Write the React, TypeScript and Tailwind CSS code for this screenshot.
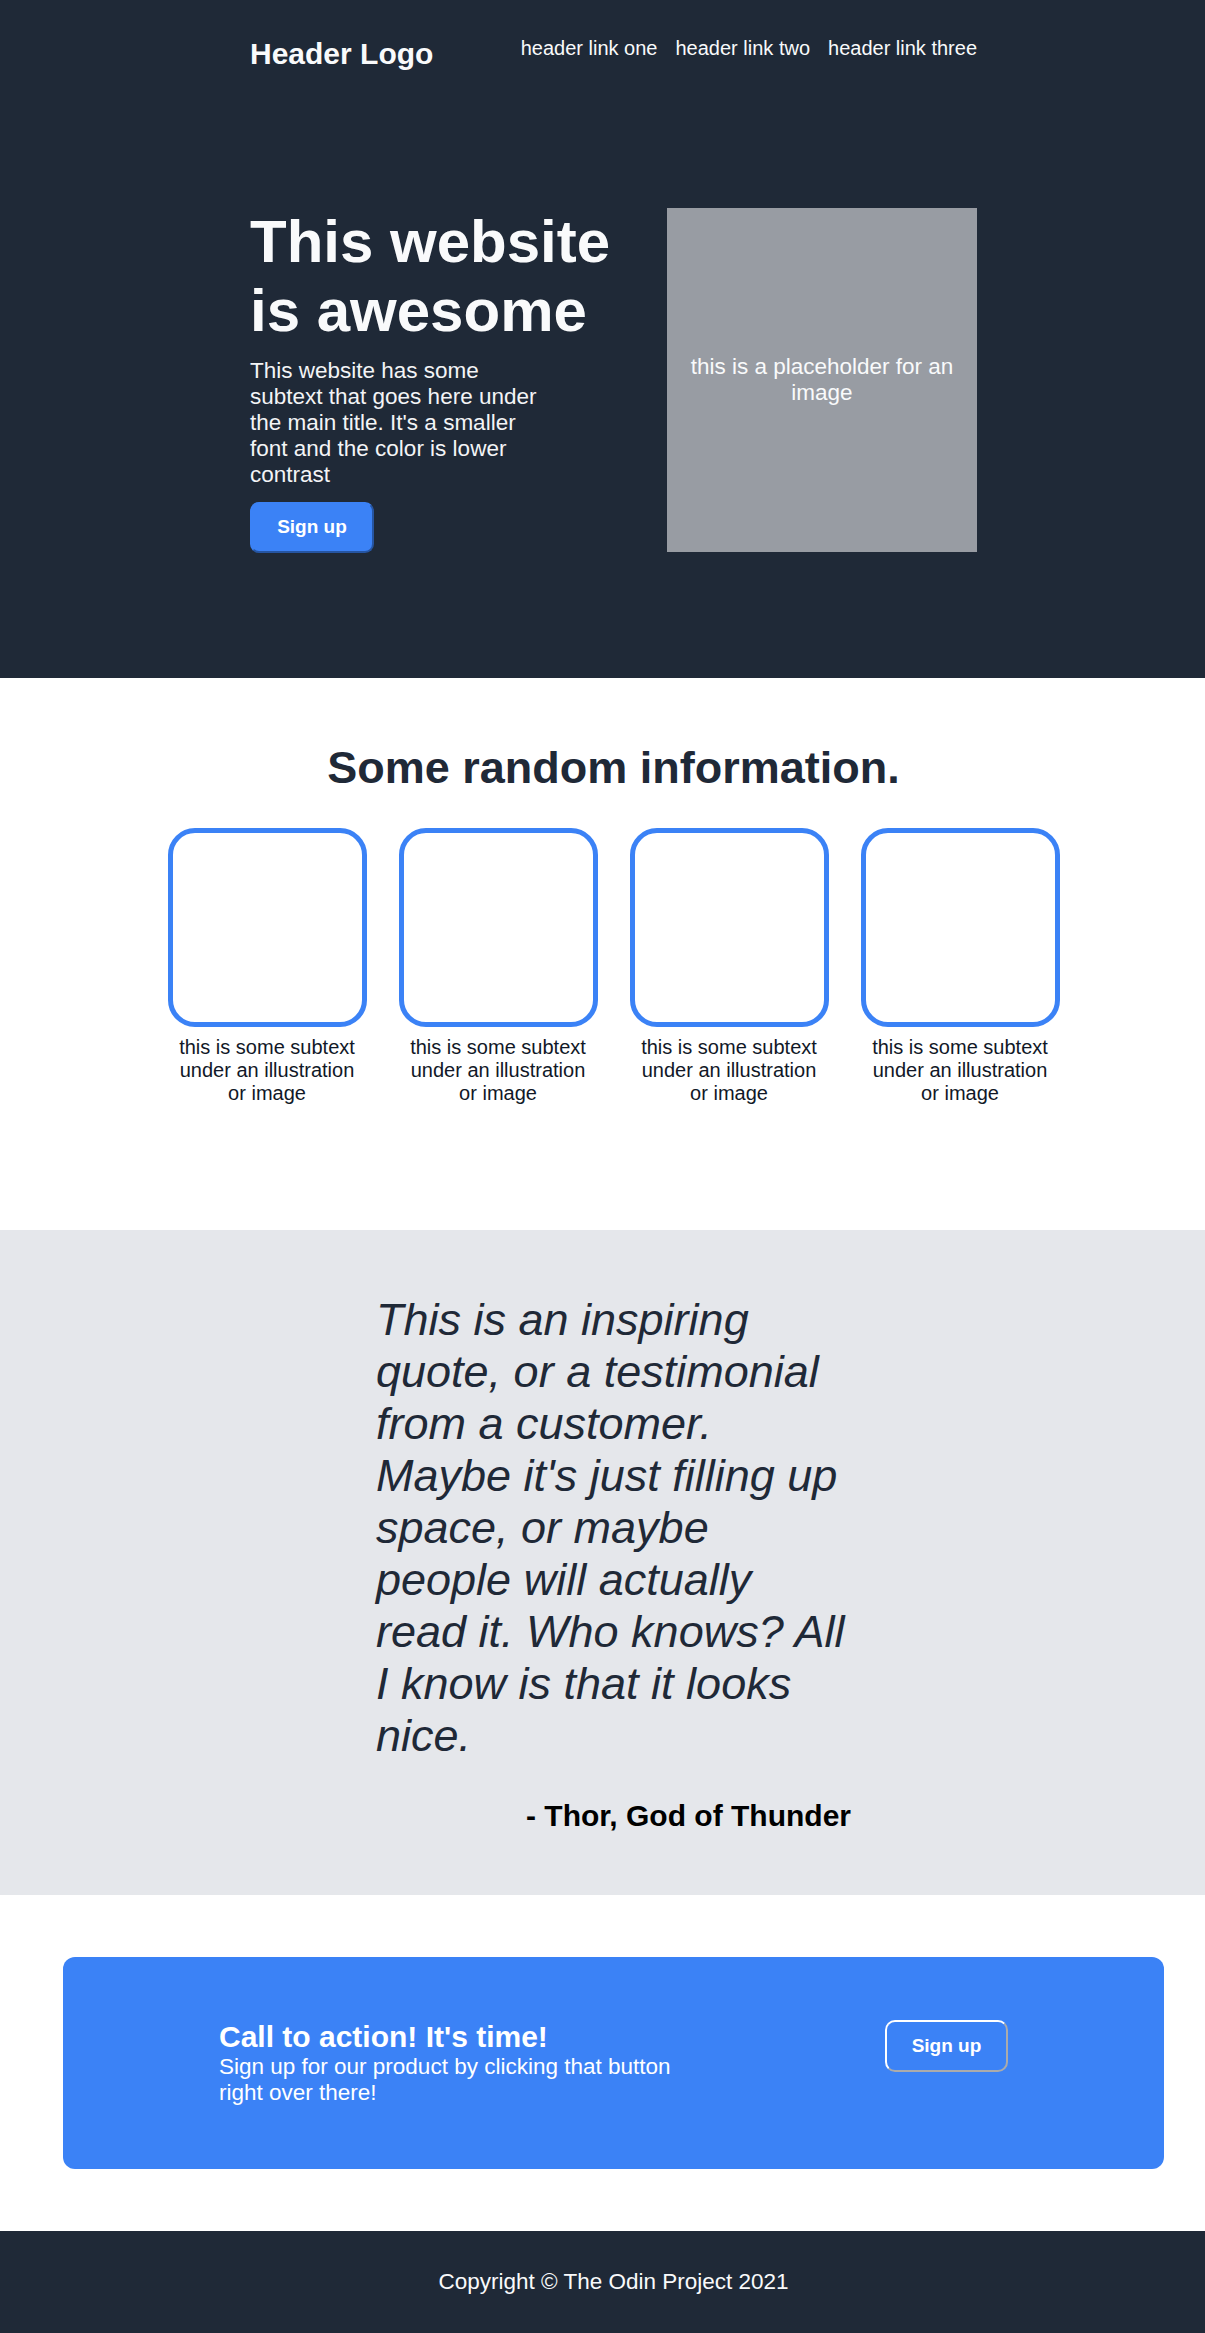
import React from 'react';

const features = [
  'this is some subtext under an illustration or image',
  'this is some subtext under an illustration or image',
  'this is some subtext under an illustration or image',
  'this is some subtext under an illustration or image',
];

function Header() {
  return (
    <div className="w-[727px] mx-auto pt-[37px] flex justify-between items-start">
      <div className="text-[30px] font-bold leading-[normal] text-[#f9fafb]">Header Logo</div>
      <nav className="flex gap-[18px] text-[20px] leading-[normal] text-[#f9fafb]">
        <a href="#">header link one</a>
        <a href="#">header link two</a>
        <a href="#">header link three</a>
      </nav>
    </div>
  );
}

function Hero() {
  return (
    <div className="w-[727px] mx-auto mt-[136px] flex justify-between items-center">
      <div className="w-[400px] flex flex-col items-start">
        <h1 className="text-[60px] font-bold leading-[normal] text-[#f9fafb]">This website is awesome</h1>
        <p className="mt-[13px] w-[295px] text-[22.5px] leading-[normal] text-[#f3f4f6]">
          This website has some subtext that goes here under the main title. It's a smaller font and the color is lower
          contrast
        </p>
        <button className="mt-[14px] w-[124px] h-[51px] rounded-[9px] bg-[#3b82f6] border-2 [border-style:outset] border-[#3b82f6] text-[19px] font-bold text-white">
          Sign up
        </button>
      </div>
      <div className="w-[310px] h-[344px] bg-[#989ca3] flex items-center justify-center text-center px-4 text-[22.5px] leading-[normal] text-[#f9fafb]">
        this is a placeholder for an image
      </div>
    </div>
  );
}

export default function App() {
  return (
    <div className="font-['Liberation_Sans',Arial,sans-serif]">
      <section className="bg-[#1f2937] pl-[22px] h-[678px] overflow-hidden">
        <Header />
        <Hero />
      </section>

      <section className="bg-white pl-[22px] pt-[64px] h-[552px] overflow-hidden">
        <h2 className="text-center text-[45px] font-bold leading-[normal] text-[#1f2937]">Some random information.</h2>
        <div className="mt-[34px] flex justify-center gap-[32px]">
          {features.map((text, i) => (
            <div key={i} className="w-[199px] flex flex-col items-center">
              <div className="w-[199px] h-[199px] border-[5px] border-[#3b82f6] rounded-[27px]" />
              <p className="mt-[9px] w-[190px] text-center text-[20px] leading-[normal] text-[#111827]">{text}</p>
            </div>
          ))}
        </div>
      </section>

      <section className="bg-[#e5e7eb] pl-[22px] pt-[64px] h-[665px] overflow-hidden">
        <div className="w-[475px] mx-auto">
          <p className="italic text-[45px] leading-[normal] text-[#1f2937]">
            This is an inspiring quote, or a testimonial from a customer. Maybe it's just filling up space, or maybe
            people will actually read it. Who knows? All I know is that it looks nice.
          </p>
          <p className="mt-[37px] text-right text-[30px] font-bold leading-[normal] text-black">- Thor, God of Thunder</p>
        </div>
      </section>

      <section className="bg-white pl-[22px] pt-[62px] h-[336px] overflow-hidden">
        <div className="w-[1101px] h-[212px] mx-auto rounded-[12px] bg-[#3b82f6] px-[156px] pt-[63px] flex justify-between items-start">
          <div className="text-white">
            <h3 className="text-[30px] font-bold leading-[normal]">Call to action! It's time!</h3>
            <p className="w-[470px] text-[22.5px] leading-[normal]">
              Sign up for our product by clicking that button right over there!
            </p>
          </div>
          <button className="w-[123px] h-[52px] rounded-[10px] border-2 [border-style:outset] border-white text-[19px] font-bold text-white">
            Sign up
          </button>
        </div>
      </section>

      <footer className="bg-[#1f2937] pl-[22px] h-[102px] flex items-center justify-center text-[22.5px] leading-[normal] text-[#f9fafb]">
        Copyright © The Odin Project 2021
      </footer>
    </div>
  );
}
